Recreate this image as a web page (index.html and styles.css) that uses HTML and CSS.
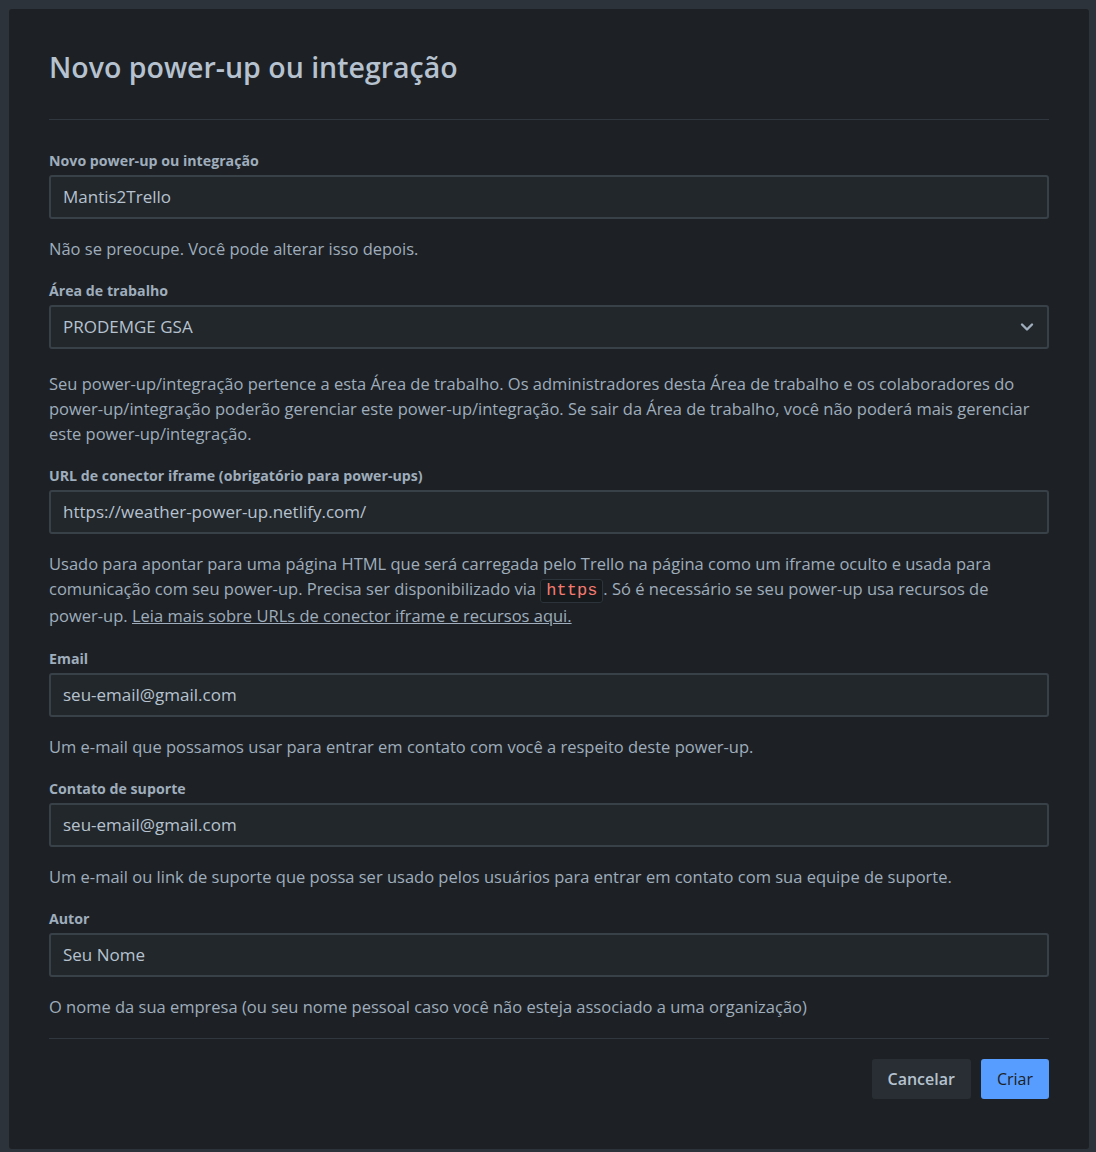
FILE: index.html
```html
<!DOCTYPE html>
<html lang="pt-BR">
<head>
<meta charset="utf-8">
<title>Novo power-up ou integração</title>
<link rel="stylesheet" href="styles.css">
</head>
<body>
<div class="modal">
  <h1 class="title">Novo power-up ou integração</h1>
  <div class="rule rule-top"></div>
  <form class="form">
    <label class="label label-first">Novo power-up ou integração</label>
    <div class="input">Mantis2Trello</div>
    <p class="help">Não se preocupe. Você pode alterar isso depois.</p>

    <label class="label">Área de trabalho</label>
    <div class="input select">
      <span>PRODEMGE GSA</span>
      <svg class="chevron" width="16" height="16" viewBox="0 0 16 16"><path d="M3 5.5 L8 10.5 L13 5.5" fill="none" stroke="#9fadbc" stroke-width="2.4" stroke-linecap="round" stroke-linejoin="round"/></svg>
    </div>
    <p class="help help-select">Seu power-up/integração pertence a esta Área de trabalho. Os administradores desta Área de trabalho e os colaboradores do power-up/integração poderão gerenciar este power-up/integração. Se sair da Área de trabalho, você não poderá mais gerenciar este power-up/integração.</p>

    <label class="label">URL de conector iframe (obrigatório para power-ups)</label>
    <div class="input">https://weather-power-up.netlify.com/</div>
    <p class="help help-url">Usado para apontar para uma página HTML que será carregada pelo Trello na página como um iframe oculto e usada para comunicação com seu power-up. Precisa ser disponibilizado via <code class="code">https</code>. Só é necessário se seu power-up usa recursos de <span class="nowrap">power-up.</span> <a class="link" href="#">Leia mais sobre URLs de conector iframe e recursos aqui.</a></p>

    <label class="label">Email</label>
    <div class="input">seu-email@gmail.com</div>
    <p class="help">Um e-mail que possamos usar para entrar em contato com você a respeito deste power-up.</p>

    <label class="label">Contato de suporte</label>
    <div class="input">seu-email@gmail.com</div>
    <p class="help">Um e-mail ou link de suporte que possa ser usado pelos usuários para entrar em contato com sua equipe de suporte.</p>

    <label class="label">Autor</label>
    <div class="input">Seu Nome</div>
    <p class="help">O nome da sua empresa (ou seu nome pessoal caso você não esteja associado a uma organização)</p>
  </form>
  <div class="rule rule-bottom"></div>
  <div class="actions">
    <button class="btn btn-cancel" type="button">Cancelar</button>
    <button class="btn btn-primary" type="button">Criar</button>
  </div>
</div>
</body>
</html>
```

FILE: styles.css
```css
* { box-sizing: border-box; }
html, body { margin: 0; padding: 0; }
body {
  background: #2c333a;
  padding: 9px 7px 3px 9px;
  font-family: "Open Sans", "Liberation Sans", sans-serif;
  color: #9fadbc;
}
.modal {
  background: #1d2125;
  border-radius: 3px;
  width: 1080px;
  height: 1140px;
  padding: 40px 40px 50px 40px;
  display: flex;
  flex-direction: column;
}
.title {
  margin: 0;
  font-size: 28.5px;
  line-height: 37px;
  font-weight: 600;
  color: #b6c2cf;
}
.rule {
  height: 1px;
  background: #30373e;
  flex: 0 0 1px;
}
.rule-top { margin-top: 33px; }
.rule-bottom { margin-top: 19px; }
.form { display: flex; flex-direction: column; }
.label {
  display: block;
  font-size: 14.2px;
  line-height: 20px;
  font-weight: 700;
  color: #9fadbc;
  margin-top: 20px;
}
.label-first { margin-top: 30.5px; }
.input {
  margin-top: 4px;
  height: 44px;
  border: 2px solid #384148;
  border-radius: 3px;
  background: #22272b;
  padding: 0 12px;
  display: flex;
  align-items: center;
  font-size: 17px;
  color: #b6c2cf;
}
.select { justify-content: space-between; padding-right: 12px; }
.chevron { display: block; }
.help {
  margin: 17px 0 0 0;
  font-size: 16.5px;
  line-height: 25px;
  color: #9fadbc;
}
.help-select { margin-top: 22px; }
.help-url { margin-bottom: 1px; }
.nowrap { white-space: nowrap; }
.code {
  font-family: "Liberation Mono", "DejaVu Sans Mono", monospace;
  font-size: 17px;
  color: #f57a70;
  background: #161a1d;
  border: 1px solid #2c333a;
  border-radius: 3px;
  padding: 1px 5px 2px;
}
.link { color: #9fadbc; text-decoration: underline; }
.actions {
  margin-top: 20px;
  display: flex;
  justify-content: flex-end;
  gap: 10px;
}
.btn {
  height: 40px;
  border: 0;
  border-radius: 3px;
  font-family: "Open Sans", "Liberation Sans", sans-serif;
  font-size: 16px;
  padding: 0 16px;
  cursor: pointer;
}
.btn-cancel {
  background: #282e33;
  color: #b6c2cf;
  font-weight: 600;
}
.btn-primary {
  background: #579dff;
  color: #1d2125;
  font-weight: 500;
}
```
